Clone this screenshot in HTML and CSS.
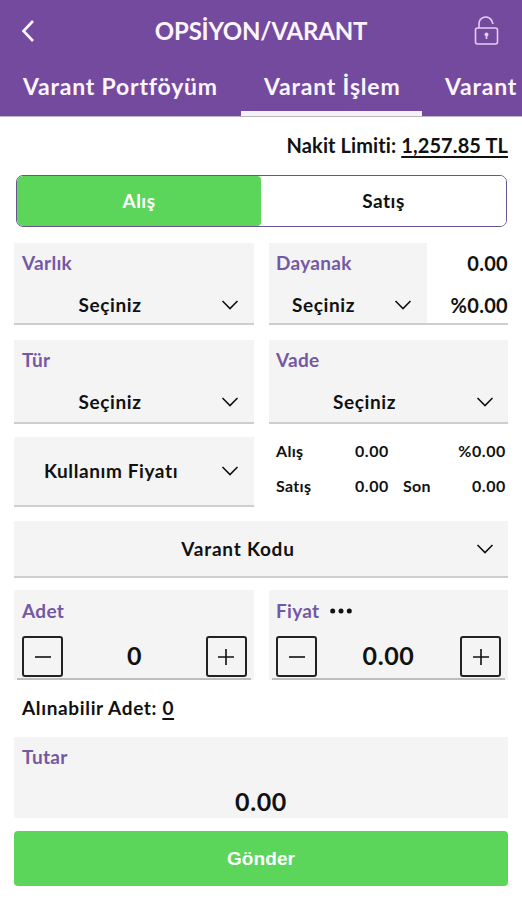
FILE: index.html
```html
<!DOCTYPE html>
<html lang="tr">

<head>
    <meta charset="UTF-8">
    <meta name="viewport" content="width=device-width, initial-scale=1.0">
    <title>Opsiyon/Varant</title>
    <link rel="stylesheet" href="styles.css">
</head>

<body>
    <header class="header">
        <div class="header__top">
            <svg class="header__back" viewBox="0 0 14 24"><path d="M12 2L2.500 12L12 22"/></svg>
            <h1 class="header__title">OPSİYON/VARANT</h1>
            <svg class="header__lock" viewBox="0 0 26 32">
                <rect x="1.500" y="13" width="22" height="16" rx="2"/>
                <path d="M5 13V8.500a6.800 6.800 0 0 1 12.500-3.300L19 9"/>
                <circle class="header__hole" cx="12.500" cy="19.500" r="2"/>
                <path d="M12.500 20v4"/>
            </svg>
        </div>
        <nav class="tabs">
            <a class="tabs__item">Varant Portföyüm</a>
            <a class="tabs__item tabs__item--active">Varant İşlem</a>
            <a class="tabs__item">Varant</a>
        </nav>
    </header>

    <main class="order">
        <div class="limit">Nakit Limiti: <span class="limit__value">1,257.85 TL</span></div>

        <div class="switch">
            <button class="switch__item switch__item--active">Alış</button>
            <button class="switch__item">Satış</button>
        </div>

        <div class="row">
            <div class="field">
                <div class="field__label">Varlık</div>
                <div class="field__select">
                    <span class="field__text">Seçiniz</span>
                    <svg class="arrow" viewBox="0 0 18 10"><path d="M1.500 1L9 8.500L16.500 1"/></svg>
                </div>
            </div>
            <div class="underlying">
                <div class="field field--small">
                    <div class="field__label">Dayanak</div>
                    <div class="field__select">
                        <span class="field__text">Seçiniz</span>
                        <svg class="arrow" viewBox="0 0 18 10"><path d="M1.500 1L9 8.500L16.500 1"/></svg>
                    </div>
                </div>
                <div class="underlying__prices">
                    <span>0.00</span>
                    <span>%0.00</span>
                </div>
            </div>
        </div>

        <div class="row row--second">
            <div class="field">
                <div class="field__label">Tür</div>
                <div class="field__select">
                    <span class="field__text">Seçiniz</span>
                    <svg class="arrow" viewBox="0 0 18 10"><path d="M1.500 1L9 8.500L16.500 1"/></svg>
                </div>
            </div>
            <div class="field field--right">
                <div class="field__label">Vade</div>
                <div class="field__select">
                    <span class="field__text">Seçiniz</span>
                    <svg class="arrow" viewBox="0 0 18 10"><path d="M1.500 1L9 8.500L16.500 1"/></svg>
                </div>
            </div>
        </div>

        <div class="row row--third">
            <div class="field field--single">
                <div class="field__select">
                    <span class="field__text field__text--strike">Kullanım Fiyatı</span>
                    <svg class="arrow" viewBox="0 0 18 10"><path d="M1.500 1L9 8.500L16.500 1"/></svg>
                </div>
            </div>
            <div class="quotes">
                <span>Alış</span>
                <span class="quotes__num">0.00</span>
                <span></span>
                <span class="quotes__num">%0.00</span>
                <span>Satış</span>
                <span class="quotes__num">0.00</span>
                <span class="quotes__last">Son</span>
                <span class="quotes__num">0.00</span>
            </div>
        </div>

        <div class="field field--single field--code">
            <div class="field__select">
                <span class="field__text field__text--code">Varant Kodu</span>
                <svg class="arrow" viewBox="0 0 18 10"><path d="M1.500 1L9 8.500L16.500 1"/></svg>
            </div>
        </div>

        <div class="row row--amount">
            <div class="counter">
                <div class="field__label">Adet</div>
                <div class="counter__line">
                    <button class="counter__btn"><svg viewBox="0 0 16 16"><path d="M0 8h16"/></svg></button>
                    <span class="counter__value">0</span>
                    <button class="counter__btn"><svg viewBox="0 0 16 16"><path d="M0 8h16M8 0v16"/></svg></button>
                </div>
            </div>
            <div class="counter">
                <div class="field__label">
                    Fiyat
                    <svg class="dots" viewBox="0 0 22 6"><circle cx="2.700" cy="3" r="2.500"/><circle cx="11" cy="3" r="2.500"/><circle cx="19.300" cy="3" r="2.500"/></svg>
                </div>
                <div class="counter__line">
                    <button class="counter__btn"><svg viewBox="0 0 16 16"><path d="M0 8h16"/></svg></button>
                    <span class="counter__value">0.00</span>
                    <button class="counter__btn"><svg viewBox="0 0 16 16"><path d="M0 8h16M8 0v16"/></svg></button>
                </div>
            </div>
        </div>

        <div class="available">Alınabilir Adet: <span class="available__value">0</span></div>

        <div class="total">
            <div class="field__label">Tutar</div>
            <div class="total__value">0.00</div>
        </div>

        <button class="send">Gönder</button>
    </main>
</body>

</html>
```
FILE: styles.css
```css
* {
    box-sizing: border-box;
}

body {
    margin: 0;
    background-color: #fff;
    font: bold 19px/24px Lato, "Open Sans", sans-serif;
    letter-spacing: 0.3px;
    color: #111;
    overflow: hidden;
}

button {
    font: inherit;
    letter-spacing: inherit;
    color: inherit;
    padding: 0;
    border: 0;
    cursor: pointer;
}

svg {
    display: block;
    flex: none;
    fill: none;
    stroke: currentColor;
}

.header {
    height: 117px;
    background-color: #744a9e;
    border-bottom: 1px solid #bdb5c5;
    color: #fbf5ff;
    overflow: hidden;
}

.header__top {
    display: flex;
    align-items: center;
    justify-content: space-between;
    height: 62px;
    padding: 0 22px 0 21px;
}

.header__back {
    width: 14px;
    height: 24px;
    stroke-width: 2.6;
}

.header__title {
    margin: 0 0 0 13px;
    font-size: 24px;
    letter-spacing: -0.2px;
}

.header__lock {
    width: 26px;
    height: 32px;
    stroke-width: 1.6;
    color: #e6cdf5;
}

.header__hole {
    fill: currentColor;
    stroke: none;
}

.tabs {
    display: flex;
    height: 54px;
    font-size: 23px;
    letter-spacing: 0.8px;
    white-space: nowrap;
}

.tabs__item {
    flex: none;
    height: 54px;
    padding: 12px 22px 0 23px;
}

.tabs__item:first-child {
    width: 241px;
}

.tabs__item--active {
    width: 181px;
    border-bottom: 5px solid #f5f2f6;
}

.order {
    padding: 16px 14px 0;
}

.limit {
    text-align: right;
    font-size: 20px;
    letter-spacing: 0.1px;
}

.limit__value,
.available__value {
    text-decoration: underline;
    text-decoration-thickness: 2px;
    text-underline-offset: 3px;
    text-decoration-skip-ink: none;
}

.switch {
    display: flex;
    height: 52px;
    margin: 18px 1px 0 2px;
    border: 1px solid #685594;
    border-radius: 7px;
}

.switch__item {
    flex: 1;
    background-color: #fff;
    border-radius: 6px;
    letter-spacing: 0.5px;
}

.switch__item--active {
    flex: 0 0 244px;
    background-color: #5cd65a;
    color: #fff;
    border-radius: 6px 4px 4px 6px;
}

.row {
    display: grid;
    grid-template-columns: 240px 239px;
    column-gap: 15px;
    margin-top: 16px;
}

.row--second {
    margin-top: 15px;
}

.row--third {
    height: 70px;
    margin-top: 13px;
}

.field {
    height: 82px;
    padding: 8px 15px 0 8px;
    background-color: #f4f4f4;
    border-bottom: 2px solid #cecece;
}

.row--second .field {
    height: 84px;
}

.field--right {
    padding: 8px 14px 0 7px;
}

.field__label {
    display: flex;
    align-items: center;
    color: #7558a5;
}

.field__select {
    display: flex;
    align-items: center;
    height: 24px;
    margin-top: 18px;
}

.field__text {
    flex: 1;
    padding-right: 23px;
    text-align: center;
    letter-spacing: 0.6px;
}

.arrow {
    width: 18px;
    height: 10px;
    stroke-width: 1.6;
}

.underlying {
    display: flex;
    border-bottom: 2px solid #cecece;
}

.field--small {
    width: 158px;
    height: 80px;
    padding-left: 7px;
    border-bottom: 0;
}

.underlying__prices {
    flex: 1;
    display: flex;
    flex-direction: column;
    gap: 18px;
    padding-top: 8px;
    text-align: right;
    font-size: 20px;
}

.field--single {
    height: 70px;
    padding-top: 0;
}

.field--single .field__select {
    height: 68px;
    margin-top: 0;
}

.field__text--strike {
    padding-right: 21px;
}

.field--code {
    height: 57px;
    margin-top: 14px;
    padding-right: 14px;
}

.field--code .field__select {
    height: 55px;
}

.field__text--code {
    padding-right: 22px;
    letter-spacing: 0.75px;
}

.quotes {
    display: grid;
    grid-template-columns: 60px 53px 50px 67px;
    grid-auto-rows: 35px;
    padding: 2px 0 0 7px;
    font-size: 16px;
    align-content: start;
    line-height: 24px;
}

.quotes__num {
    text-align: right;
    letter-spacing: 0.6px;
}

.quotes__last {
    padding-left: 14px;
}

.row--amount {
    margin-top: 12px;
}

.counter {
    height: 90px;
    padding: 9px 7px 0 8px;
    background: linear-gradient(#bdbdbd, #bdbdbd) center bottom / calc(100% - 6px) 2px no-repeat #f4f4f4;
}

.counter + .counter {
    padding-left: 7px;
}

.counter__line {
    display: flex;
    align-items: center;
    justify-content: space-between;
    margin-top: 13px;
}

.counter__btn {
    display: flex;
    align-items: center;
    justify-content: center;
    width: 41px;
    height: 41px;
    border: 2px solid #222;
    border-radius: 3px;
    background-color: transparent;
}

.counter__btn svg {
    width: 16px;
    height: 16px;
    stroke-width: 1.6;
}

.counter__value {
    padding-bottom: 3px;
    font-size: 25px;
    letter-spacing: 0.6px;
}

.dots {
    width: 22px;
    height: 6px;
    margin-left: 11px;
    fill: #111;
    stroke: none;
}

.available {
    margin: 16px 0 0 8px;
    letter-spacing: 0.65px;
}

.total {
    height: 81px;
    margin-top: 17px;
    padding: 8px;
    background-color: #f4f4f4;
}

.total__value {
    margin-top: 20px;
    text-align: center;
    font-size: 25px;
    letter-spacing: 0.6px;
}

.send {
    display: block;
    width: 100%;
    height: 55px;
    margin-top: 13px;
    background-color: #5cd65a;
    border-radius: 4px;
    color: #fff;
    font-family: "Liberation Sans", Arial, sans-serif;
    letter-spacing: 0.1px;
}
```
